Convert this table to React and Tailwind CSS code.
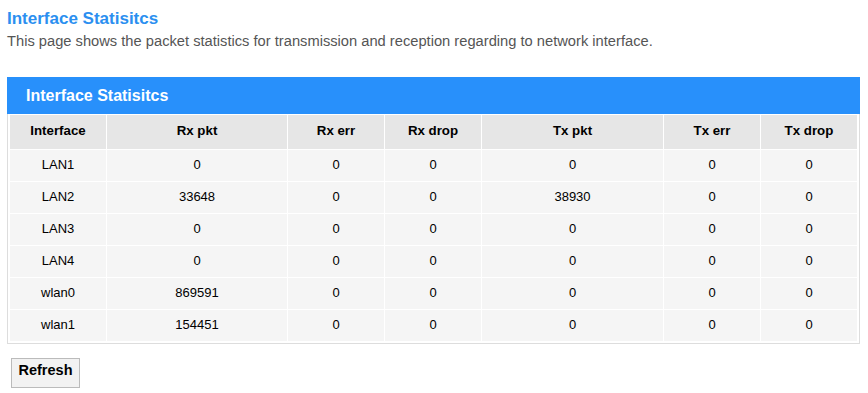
import React from "react";

const rows = [
  ["LAN1", "0", "0", "0", "0", "0", "0"],
  ["LAN2", "33648", "0", "0", "38930", "0", "0"],
  ["LAN3", "0", "0", "0", "0", "0", "0"],
  ["LAN4", "0", "0", "0", "0", "0", "0"],
  ["wlan0", "869591", "0", "0", "0", "0", "0"],
  ["wlan1", "154451", "0", "0", "0", "0", "0"],
];

const heads = ["Interface", "Rx pkt", "Rx err", "Rx drop", "Tx pkt", "Tx err", "Tx drop"];
const widths = ["w-[96px]", "w-[180px]", "w-[96px]", "w-[96px]", "w-[181px]", "w-[96px]", "w-[96px]"];

export default function App() {
  return (
    <div className="w-[868px] h-[393px] bg-white px-[7px] pt-[6px] font-['Liberation_Sans',Arial,sans-serif] text-black">
      <h1 className="text-[17px] leading-[25px] font-bold text-[#2b8ff0]">Interface Statisitcs</h1>
      <p className="text-[14.7px] leading-[20px] text-[#555555]">
        This page shows the packet statistics for transmission and reception regarding to network interface.
      </p>
      <div className="mt-[26px] w-[853px]">
        <div className="h-[37px] bg-[#2890fb] pl-[19px] flex items-center text-white font-bold text-[16px]">
          Interface Statisitcs
        </div>
        <div className="border border-t-0 border-[#dddddd] px-[1px] pb-[1px]">
          <table className="border-separate border-spacing-[1px] text-[13px] text-center">
            <colgroup>
              {widths.map((w, i) => (
                <col key={i} className={w} />
              ))}
            </colgroup>
            <thead>
              <tr>
                {heads.map((h) => (
                  <th key={h} className="h-[34px] p-0 pb-[2px] bg-[#e6e6e6] font-bold text-[13.3px]">
                    {h}
                  </th>
                ))}
              </tr>
            </thead>
            <tbody>
              {rows.map((r) => (
                <tr key={r[0]}>
                  {r.map((c, i) => (
                    <td key={i} className="h-[31px] p-0 pb-[2px] bg-[#f5f5f5]">
                      {c}
                    </td>
                  ))}
                </tr>
              ))}
            </tbody>
          </table>
        </div>
      </div>
      <div className="mt-[14px] pl-[4px] flex">
        <button className="w-[69px] h-[30px] pb-[5px] border border-[#bbbbbb] bg-[#f2f2f2] font-bold text-[14.5px] text-black">
          Refresh
        </button>
      </div>
    </div>
  );
}
